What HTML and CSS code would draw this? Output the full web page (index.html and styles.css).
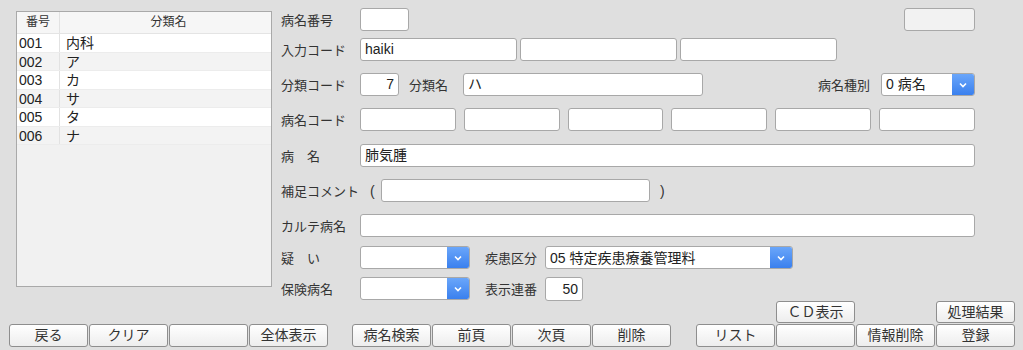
FILE: index.html
```html
<!DOCTYPE html>
<html lang="ja">
<head>
<meta charset="utf-8">
<link rel="stylesheet" href="styles.css">
</head>
<body>
<div class="main">
  <div class="list">
    <div class="thead"><div class="c1">番号</div><div class="c2">分類名</div></div>
    <div class="trow"><div class="c1">001</div><div class="c2">内科</div></div>
    <div class="trow alt"><div class="c1">002</div><div class="c2">ア</div></div>
    <div class="trow"><div class="c1">003</div><div class="c2">カ</div></div>
    <div class="trow alt"><div class="c1">004</div><div class="c2">サ</div></div>
    <div class="trow"><div class="c1">005</div><div class="c2">タ</div></div>
    <div class="trow alt"><div class="c1">006</div><div class="c2">ナ</div></div>
  </div>
  <div class="form">
    <div class="row first">
      <span class="lbl">病名番号</span>
      <div class="inp w49"></div>
      <div class="spacer"></div>
      <div class="inp gray w71"></div>
    </div>
    <div class="row mt7">
      <span class="lbl">入力コード</span>
      <div class="triple">
        <div class="inp">haiki</div>
        <div class="inp"></div>
        <div class="inp"></div>
      </div>
    </div>
    <div class="row mt12">
      <span class="lbl">分類コード</span>
      <div class="inp w39 right">7</div>
      <span class="lbl2 ml10">分類名</span>
      <div class="inp w240">ハ</div>
      <div class="spacer"></div>
      <span class="lbl3">病名種別</span>
      <div class="sel w94"><span class="val">0 病名</span><span class="arrow"><svg width="10" height="8" viewBox="0 0 10 8"><path d="M2 2.5 L5 5.5 L8 2.5" fill="none" stroke="#fff" stroke-width="1.6"/></svg></span></div>
    </div>
    <div class="row mt12">
      <span class="lbl">病名コード</span>
      <div class="six">
        <div class="inp"></div><div class="inp"></div><div class="inp"></div>
        <div class="inp"></div><div class="inp"></div><div class="inp"></div>
      </div>
    </div>
    <div class="row mt13">
      <span class="lbl">病　名</span>
      <div class="inp grow">肺気腫</div>
    </div>
    <div class="row mt12">
      <span class="lbl">補足コメント</span>
      <span class="paren-l">(</span>
      <div class="inp w269"></div>
      <span class="paren-r">)</span>
    </div>
    <div class="row mt12">
      <span class="lbl">カルテ病名</span>
      <div class="inp grow"></div>
    </div>
    <div class="row mt9">
      <span class="lbl">疑　い</span>
      <div class="sel w110 h24"><span class="val"></span><span class="arrow"><svg width="10" height="8" viewBox="0 0 10 8"><path d="M2 2.5 L5 5.5 L8 2.5" fill="none" stroke="#fff" stroke-width="1.6"/></svg></span></div>
      <span class="lbl4">疾患区分</span>
      <div class="sel w248 h24"><span class="val">05 特定疾患療養管理料</span><span class="arrow"><svg width="10" height="8" viewBox="0 0 10 8"><path d="M2 2.5 L5 5.5 L8 2.5" fill="none" stroke="#fff" stroke-width="1.6"/></svg></span></div>
    </div>
    <div class="row mt8">
      <span class="lbl">保険病名</span>
      <div class="sel w110 h24"><span class="val"></span><span class="arrow"><svg width="10" height="8" viewBox="0 0 10 8"><path d="M2 2.5 L5 5.5 L8 2.5" fill="none" stroke="#fff" stroke-width="1.6"/></svg></span></div>
      <span class="lbl4">表示連番</span>
      <div class="inp w38 h24 right">50</div>
    </div>
  </div>
</div>
<div class="buttons">
  <div class="grp">
    <button class="btn">戻る</button>
    <button class="btn">クリア</button>
    <button class="btn"></button>
    <button class="btn">全体表示</button>
  </div>
  <div class="grp">
    <button class="btn">病名検索</button>
    <button class="btn">前頁</button>
    <button class="btn">次頁</button>
    <button class="btn">削除</button>
  </div>
  <div class="grp grp3">
    <button class="btn up col2">ＣＤ表示</button>
    <button class="btn up col4">処理結果</button>
    <button class="btn low col1">リスト</button>
    <button class="btn low col2"></button>
    <button class="btn low col3">情報削除</button>
    <button class="btn low col4">登録</button>
  </div>
</div>
</body>
</html>
```

FILE: styles.css
```css
* { box-sizing: border-box; }
html, body { margin: 0; padding: 0; }
body {
  width: 1023px;
  height: 350px;
  background: #dfdfdf;
  font-family: "Liberation Sans", "Noto Sans CJK JP", sans-serif;
  font-size: 13px;
  color: #333;
  overflow: hidden;
}
.main {
  display: flex;
  height: 301px;
}
.list {
  margin: 11px 0 0 16px;
  width: 256px;
  height: 276px;
  border: 1px solid #a9a9a9;
  background: #f1f1f1;
  flex: none;
}
.thead, .trow {
  display: flex;
}
.thead {
  height: 22px;
  background: #f6f6f6;
  border-bottom: 1px solid #e4e4e4;
  font-size: 12px;
  color: #333;
  line-height: 21px;
}
.thead .c1, .thead .c2 { text-align: center; }
.c1 {
  width: 43px;
  border-right: 1px solid #e2e2e2;
  padding-left: 2px;
}
.c2 { flex: 1; padding-left: 6px; }
.trow {
  height: 18.5px;
  line-height: 18px;
  background: #fff;
  font-size: 14px;
  color: #222;
  border-bottom: 1px solid #ececec;
}
.trow.alt { background: #f3f3f3; }
.thead .c1 { padding-left: 0; }

.form {
  margin-left: 9px;
  width: 694px;
  flex: none;
}
.row {
  display: flex;
  align-items: center;
  height: 23px;
}
.row.first { margin-top: 8px; }
.mt7 { margin-top: 7px; }
.mt8 { margin-top: 8px; }
.mt9 { margin-top: 9px; }
.mt12 { margin-top: 12px; }
.mt13 { margin-top: 13px; }
.lbl {
  width: 79px;
  flex: none;
  font-size: 13px;
  color: #333;
}
.lbl2 { width: 54px; flex: none; }
.ml10 { margin-left: 10px; }
.lbl3 { margin-right: 11px; }
.lbl4 { margin-left: 15px; width: 60px; flex: none; }
.spacer { flex: 1; }
.inp {
  height: 23px;
  background: #fff;
  border: 1px solid #a8a8a8;
  border-radius: 3px;
  font-size: 14px;
  color: #222;
  line-height: 21px;
  padding: 0 4px;
  flex: none;
  white-space: nowrap;
}
.inp.right { text-align: right; }
.inp.gray { background: #f2f2f2; }
.h24 { height: 24px; line-height: 22px; }
.w38 { width: 38px; }
.w39 { width: 39px; }
.w49 { width: 49px; }
.w71 { width: 71px; }
.w94 { width: 94px; }
.w110 { width: 110px; }
.w240 { width: 240px; }
.w248 { width: 248px; }
.w269 { width: 269px; }
.grow { flex: 1; }
.triple {
  display: flex;
  gap: 3px;
}
.triple .inp { width: 157px; }
.six {
  display: flex;
  gap: 8px;
  flex: 1;
}
.six .inp { flex: 1; }
.paren-l { margin-left: 10px; width: 11px; font-size: 14px; }
.paren-r { margin-left: 10px; font-size: 14px; }
.sel {
  display: flex;
  height: 23px;
  border: 1px solid #a8a8a8;
  border-radius: 3px;
  background: #fff;
  overflow: hidden;
  flex: none;
}
.sel .val {
  flex: 1;
  font-size: 14px;
  color: #222;
  padding-left: 4px;
  line-height: 21px;
  white-space: nowrap;
}
.sel.h24 .val { line-height: 22px; }
.sel .arrow {
  width: 22px;
  background: linear-gradient(#6aa6fa, #3a80ee);
  display: flex;
  align-items: center;
  justify-content: center;
}
.buttons {
  display: flex;
  align-items: flex-end;
  padding-left: 9px;
}
.grp {
  display: flex;
  gap: 1px;
}
.grp + .grp { margin-left: 24px; }
.grp3 {
  display: grid;
  grid-template-columns: repeat(4, 79px);
  grid-template-rows: 22px 23px;
  column-gap: 1px;
}
.grp + .grp3 { margin-left: 25px; }
.grp3 .up { grid-row: 1; height: 22px; }
.grp3 .low { grid-row: 2; }
.grp3 .col1 { grid-column: 1; }
.grp3 .col2 { grid-column: 2; }
.grp3 .col3 { grid-column: 3; }
.grp3 .col4 { grid-column: 4; }
.btn {
  width: 79px;
  height: 23px;
  padding: 0;
  border: 1px solid #8e8e8e;
  border-radius: 3px;
  background: linear-gradient(#ffffff, #ededed);
  font-family: "Liberation Sans", "Noto Sans CJK JP", sans-serif;
  font-size: 14px;
  color: #333;
  line-height: 21px;
}
```
